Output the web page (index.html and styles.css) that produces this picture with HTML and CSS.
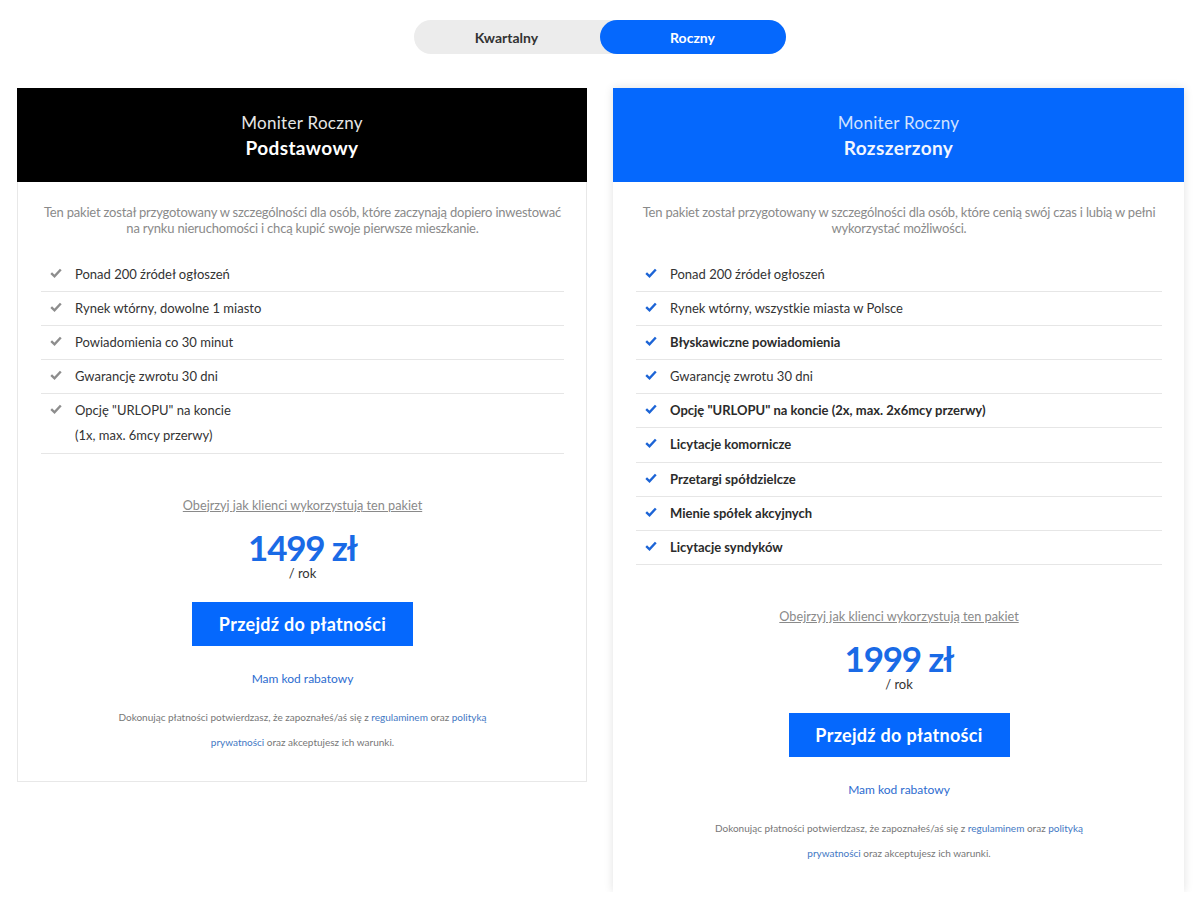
FILE: index.html
```html
<!DOCTYPE html>
<html lang="pl">
<head>
<meta charset="utf-8">
<title>Moniter – cennik</title>
<link rel="stylesheet" href="styles.css">
</head>
<body>
<div class="page">
  <div class="toggle">
    <button class="toggle-opt">Kwartalny</button>
    <button class="toggle-opt active">Roczny</button>
  </div>

  <div class="plans">
    <section class="card card-basic">
      <header class="card-head head-black">
        <div class="head-title">Moniter Roczny</div>
        <div class="head-name">Podstawowy</div>
      </header>
      <div class="card-body">
        <p class="desc">Ten pakiet został przygotowany w szczególności dla osób, które zaczynają dopiero inwestować na rynku nieruchomości i chcą kupić swoje pierwsze mieszkanie.</p>
        <ul class="features grey">
          <li><svg class="chk" viewBox="0 0 12 10"><path d="M1.2 5.2 L4.5 8.3 L10.8 1.5"/></svg><span>Ponad 200 źródeł ogłoszeń</span></li>
          <li><svg class="chk" viewBox="0 0 12 10"><path d="M1.2 5.2 L4.5 8.3 L10.8 1.5"/></svg><span>Rynek wtórny, dowolne 1 miasto</span></li>
          <li><svg class="chk" viewBox="0 0 12 10"><path d="M1.2 5.2 L4.5 8.3 L10.8 1.5"/></svg><span>Powiadomienia co 30 minut</span></li>
          <li><svg class="chk" viewBox="0 0 12 10"><path d="M1.2 5.2 L4.5 8.3 L10.8 1.5"/></svg><span>Gwarancję zwrotu 30 dni</span></li>
          <li><svg class="chk" viewBox="0 0 12 10"><path d="M1.2 5.2 L4.5 8.3 L10.8 1.5"/></svg><span>Opcję "URLOPU" na koncie<br>(1x, max. 6mcy przerwy)</span></li>
        </ul>
        <div class="buy">
          <a class="watch" href="#">Obejrzyj jak klienci wykorzystują ten pakiet</a>
          <div class="price">1499 zł</div>
          <div class="per">/ rok</div>
          <a class="pay" href="#">Przejdź do płatności</a>
          <a class="promo" href="#">Mam kod rabatowy</a>
          <p class="legal">Dokonując płatności potwierdzasz, że zapoznałeś/aś się z <a href="#">regulaminem</a> oraz <a href="#">polityką prywatności</a> oraz akceptujesz ich warunki.</p>
        </div>
      </div>
    </section>

    <section class="card card-ext">
      <header class="card-head head-blue">
        <div class="head-title">Moniter Roczny</div>
        <div class="head-name">Rozszerzony</div>
      </header>
      <div class="card-body">
        <p class="desc">Ten pakiet został przygotowany w szczególności dla osób, które cenią swój czas i lubią w pełni wykorzystać możliwości.</p>
        <ul class="features blue">
          <li><svg class="chk" viewBox="0 0 12 10"><path d="M1.2 5.2 L4.5 8.3 L10.8 1.5"/></svg><span>Ponad 200 źródeł ogłoszeń</span></li>
          <li><svg class="chk" viewBox="0 0 12 10"><path d="M1.2 5.2 L4.5 8.3 L10.8 1.5"/></svg><span>Rynek wtórny, wszystkie miasta w Polsce</span></li>
          <li class="strong"><svg class="chk" viewBox="0 0 12 10"><path d="M1.2 5.2 L4.5 8.3 L10.8 1.5"/></svg><span>Błyskawiczne powiadomienia</span></li>
          <li><svg class="chk" viewBox="0 0 12 10"><path d="M1.2 5.2 L4.5 8.3 L10.8 1.5"/></svg><span>Gwarancję zwrotu 30 dni</span></li>
          <li class="strong"><svg class="chk" viewBox="0 0 12 10"><path d="M1.2 5.2 L4.5 8.3 L10.8 1.5"/></svg><span>Opcję "URLOPU" na koncie (2x, max. 2x6mcy przerwy)</span></li>
          <li class="strong"><svg class="chk" viewBox="0 0 12 10"><path d="M1.2 5.2 L4.5 8.3 L10.8 1.5"/></svg><span>Licytacje komornicze</span></li>
          <li class="strong"><svg class="chk" viewBox="0 0 12 10"><path d="M1.2 5.2 L4.5 8.3 L10.8 1.5"/></svg><span>Przetargi spółdzielcze</span></li>
          <li class="strong"><svg class="chk" viewBox="0 0 12 10"><path d="M1.2 5.2 L4.5 8.3 L10.8 1.5"/></svg><span>Mienie spółek akcyjnych</span></li>
          <li class="strong"><svg class="chk" viewBox="0 0 12 10"><path d="M1.2 5.2 L4.5 8.3 L10.8 1.5"/></svg><span>Licytacje syndyków</span></li>
        </ul>
        <div class="buy">
          <a class="watch" href="#">Obejrzyj jak klienci wykorzystują ten pakiet</a>
          <div class="price">1999 zł</div>
          <div class="per">/ rok</div>
          <a class="pay" href="#">Przejdź do płatności</a>
          <a class="promo" href="#">Mam kod rabatowy</a>
          <p class="legal">Dokonując płatności potwierdzasz, że zapoznałeś/aś się z <a href="#">regulaminem</a> oraz <a href="#">polityką prywatności</a> oraz akceptujesz ich warunki.</p>
        </div>
      </div>
    </section>
  </div>
</div>
</body>
</html>
```
FILE: styles.css
```css
* { box-sizing: border-box; }

html, body {
  margin: 0;
  padding: 0;
  background: #fff;
}

body {
  font-family: Lato, "Open Sans", "Liberation Sans", sans-serif;
  color: #333;
}

.page {
  padding: 20px 16px 0 17px;
}

/* toggle */
.toggle {
  display: grid;
  grid-template-columns: 1fr 1fr;
  width: 372px;
  height: 34px;
  margin: 0 auto;
  background: #ececec;
  border-radius: 17px;
  transform: translateX(-1px);
}

.toggle-opt {
  border: 0;
  background: transparent;
  font-family: inherit;
  font-size: 14px;
  font-weight: 700;
  color: #333;
  border-radius: 17px;
  padding: 0;
  cursor: pointer;
}

.toggle-opt.active {
  background: #0568fd;
  color: #fff;
}

/* plans */
.plans {
  display: grid;
  grid-template-columns: 570px 571px;
  column-gap: 26px;
  align-items: start;
  margin-top: 34px;
}

.card {
  background: #fff;
}

.card-basic {
  border: 1px solid #e8e8e8;
  border-top: 0;
}

.card-basic .card-head {
  margin: 0 -1px;
}

.card-ext {
  box-shadow: 0 0 9px rgba(0, 0, 0, 0.12);
}

.card-head {
  height: 94px;
  padding-top: 1px;
  display: flex;
  flex-direction: column;
  justify-content: center;
  align-items: center;
  text-align: center;
}

.head-black { background: #000; }
.head-blue { background: #0568fd; }

.head-title {
  font-size: 17px;
  line-height: 24px;
  letter-spacing: 0.3px;
  color: #e6e6e6;
}

.head-name {
  font-size: 19px;
  line-height: 26px;
  font-weight: 700;
  letter-spacing: 0.4px;
  color: #fff;
}

.head-blue .head-title { color: #d2e3ff; }
.head-blue .head-name { color: #f2f6ff; }

.card-body {
  padding: 22px 22px 26px 23px;
}

.desc {
  margin: 0;
  font-size: 13px;
  line-height: 16px;
  color: #8a8a8a;
  text-align: center;
  letter-spacing: -0.2px;
}

.features {
  list-style: none;
  margin: 22px 0 0;
  padding: 0;
}

.features li {
  display: flex;
  align-items: flex-start;
  gap: 13px;
  padding: 4px 0 4px 9px;
  border-bottom: 1px solid #e6e6e6;
  font-size: 13px;
  line-height: 25.1px;
  color: #333;
}

.features li.strong {
  font-weight: 700;
  color: #2b2b2b;
}

.chk {
  flex: none;
  width: 12px;
  height: 10px;
  margin-top: 6px;
  fill: none;
  stroke-width: 2.4;
  stroke-linejoin: miter;
}

.grey .chk { stroke: #8d8d8d; }
.blue .chk { stroke: #1c64d6; }

.buy {
  display: flex;
  flex-direction: column;
  align-items: center;
  text-align: center;
  padding-top: 42px;
}

.watch {
  font-size: 12.7px;
  line-height: 18px;
  color: #8a8a8a;
  text-decoration: underline;
}

.price {
  margin-top: 15px;
  font-size: 35px;
  line-height: 37px;
  font-weight: 700;
  letter-spacing: -1.2px;
  color: #1a6ae6;
}

.per {
  font-size: 13px;
  line-height: 15px;
  color: #333;
}

.pay {
  margin-top: 21px;
  display: flex;
  align-items: center;
  justify-content: center;
  width: 221px;
  height: 44px;
  background: #0568fd;
  color: #fff;
  font-size: 18px;
  font-weight: 700;
  letter-spacing: 0.3px;
  text-decoration: none;
}

.promo {
  margin-top: 24px;
  font-size: 12px;
  line-height: 18px;
  color: #2d6cd0;
  text-decoration: none;
}

.legal {
  margin: 17px 0 0;
  max-width: 390px;
  font-size: 10px;
  line-height: 25px;
  color: #777;
}

.legal a {
  color: #3f78c4;
  text-decoration: none;
}
```
